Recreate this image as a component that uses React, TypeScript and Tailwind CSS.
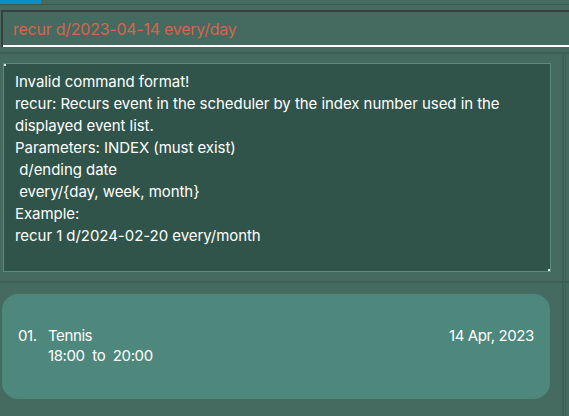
import React from "react";

const helpLines = [
  "Invalid command format!",
  "recur: Recurs event in the scheduler by the index number used in the",
  "displayed event list.",
  "Parameters: INDEX (must exist)",
  " d/ending date",
  " every/{day, week, month}",
  "Example:",
  "recur 1 d/2024-02-20 every/month",
];

export default function App() {
  return (
    <div
      className="w-[569px] h-[416px] overflow-hidden bg-[#456a60] flex flex-col"
      style={{ fontFamily: "Inter, Roboto, 'Liberation Sans', sans-serif" }}
    >
      {/* tab strip */}
      <div className="h-[4px] flex">
        <div className="w-[41px] bg-[#0b8fcb]" />
      </div>
      <div className="h-[1px] bg-[#3c5d54]" />

      {/* command box */}
      <div className="pt-[5px] pl-[1px]">
        <div className="h-[37px] border-t-2 border-l-2 border-[#3a3f3d] border-b-0 flex flex-col">
          <div className="flex-1 flex items-center px-[10px] pt-[1px] text-[16px] text-[#d8644f] tracking-[-0.25px]">
            recur d/2023-04-14 every/day
          </div>
          <div className="h-[2px] bg-white" />
        </div>
      </div>

      <div className="h-[5px]" />
      <div className="h-[2px] bg-[#3d5f55]" />

      {/* result display */}
      <div className="flex h-[227px]">
        <div className="w-[562px] pt-[9px] pl-[3px] pr-[11px]">
          <div className="relative h-[209px] bg-[#30544a] border border-[#5d8a7e] pl-[11px] pt-[7px] text-[15px] leading-[22px] text-white tracking-[-0.05px] whitespace-pre">
            <span className="absolute left-0 top-0 w-[2px] h-[2px] bg-[#dfe9e6]" />
            <span className="absolute right-0 bottom-0 w-[2px] h-[2px] bg-[#dfe9e6]" />
            {helpLines.map((l) => (
              <div key={l}>{l}</div>
            ))}
          </div>
        </div>
        <div className="w-[4px] border-l-2 border-r border-[#3e6157]" />
      </div>
      <div className="h-[2px] bg-[#3d5f55]" />

      {/* event list */}
      <div className="flex flex-1">
        <div className="w-[562px] pt-[11px] pl-[2px] pr-[12px]">
          <div className="h-[105px] rounded-[16px] bg-[#4e877b] pt-[32px] pl-[16px] pr-[16px] text-[15px] leading-[20px] text-white tracking-[-0.4px] flex">
            <div className="w-[30px]">01.</div>
            <div className="flex-1">
              <div>Tennis</div>
              <div>18:00&nbsp; to&nbsp; 20:00</div>
            </div>
            <div>14 Apr, 2023</div>
          </div>
        </div>
        <div className="w-[4px] border-l-2 border-r border-[#3e6157]" />
      </div>
    </div>
  );
}
